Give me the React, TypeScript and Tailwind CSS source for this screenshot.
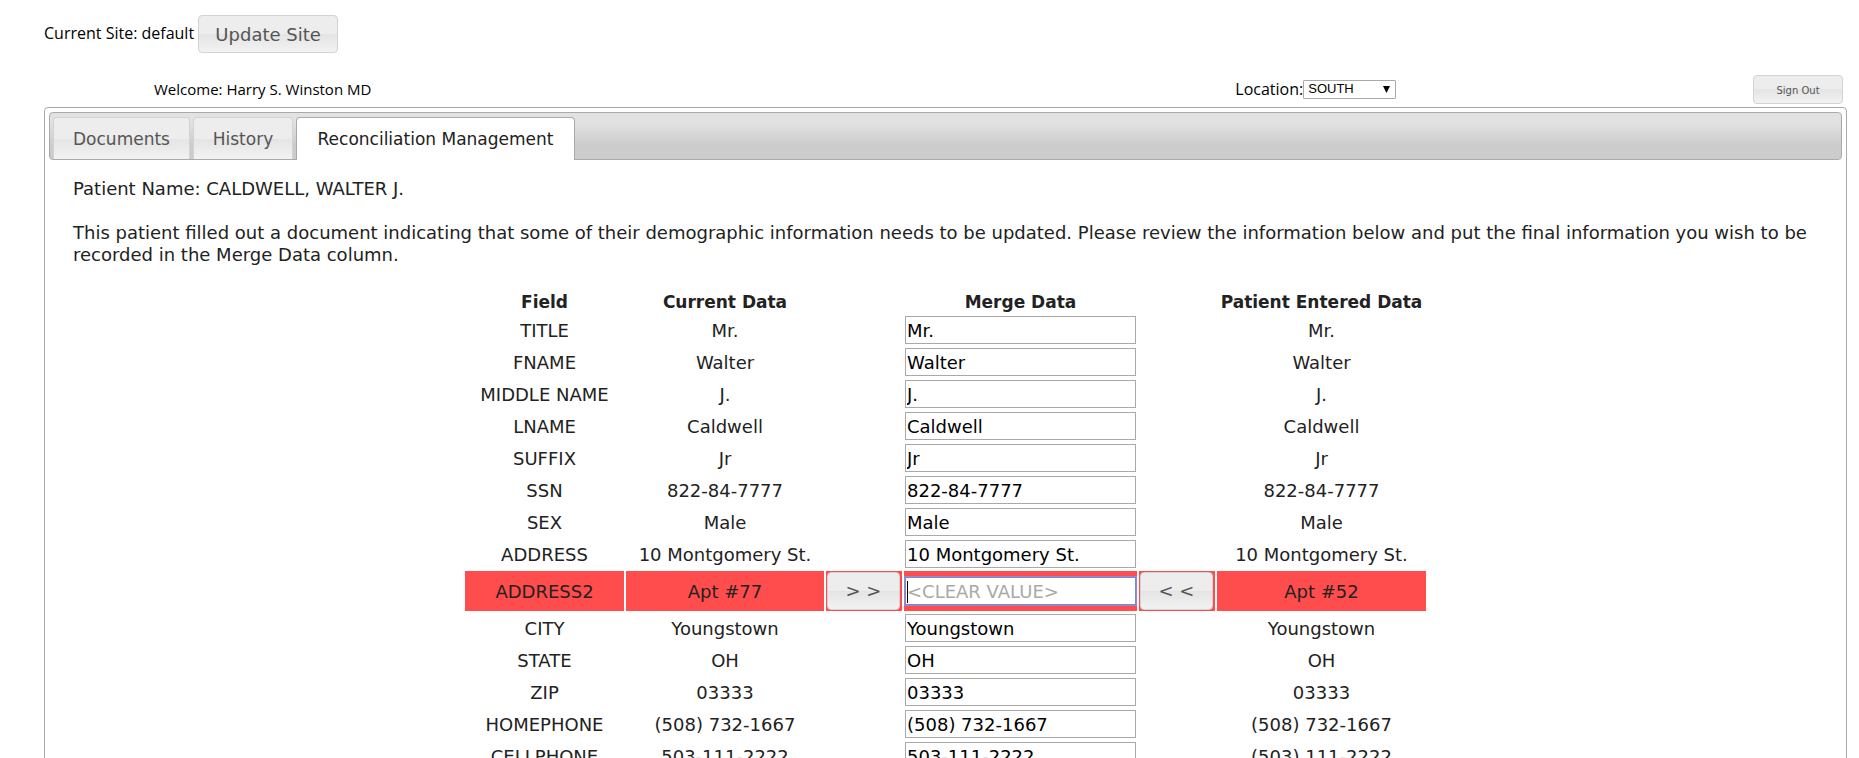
import React from 'react';

interface FieldRow {
  field: string;
  current: string;
  merge: string;
  entered: string;
}

const TABS = [
  { name: 'Documents', width: 'w-[137px]' },
  { name: 'History', width: 'w-[100px]' },
  { name: 'Reconciliation Management', width: 'w-[279px]' },
];

const ROWS: FieldRow[] = [
  { field: 'TITLE', current: 'Mr.', merge: 'Mr.', entered: 'Mr.' },
  { field: 'FNAME', current: 'Walter', merge: 'Walter', entered: 'Walter' },
  { field: 'MIDDLE NAME', current: 'J.', merge: 'J.', entered: 'J.' },
  { field: 'LNAME', current: 'Caldwell', merge: 'Caldwell', entered: 'Caldwell' },
  { field: 'SUFFIX', current: 'Jr', merge: 'Jr', entered: 'Jr' },
  { field: 'SSN', current: '822-84-7777', merge: '822-84-7777', entered: '822-84-7777' },
  { field: 'SEX', current: 'Male', merge: 'Male', entered: 'Male' },
  { field: 'ADDRESS', current: '10 Montgomery St.', merge: '10 Montgomery St.', entered: '10 Montgomery St.' },
  { field: 'ADDRESS2', current: 'Apt #77', merge: '', entered: 'Apt #52' },
  { field: 'CITY', current: 'Youngstown', merge: 'Youngstown', entered: 'Youngstown' },
  { field: 'STATE', current: 'OH', merge: 'OH', entered: 'OH' },
  { field: 'ZIP', current: '03333', merge: '03333', entered: '03333' },
  { field: 'HOMEPHONE', current: '(508) 732-1667', merge: '(508) 732-1667', entered: '(508) 732-1667' },
  { field: 'CELLPHONE', current: '503-111-2222', merge: '503-111-2222', entered: '(503) 111-2222' },
];

const GLASS = 'border border-[#d3d3d3] bg-linear-to-b from-[#ededed] from-50% to-[#f2f2f2] via-[#e4e4e4] via-50% text-[#555555]';

const MergeRow: React.FC<{ row: FieldRow }> = ({ row }) => {
  const differs = row.current !== row.entered && row.merge === '';
  const cell = differs ? 'h-10 bg-[#ff4c4c] p-0' : 'h-[30px] p-0';
  const textCell = differs ? 'h-10 bg-[#ff4c4c] p-0 pt-0.5' : 'h-[30px] p-0 pt-0.5';
  const button = `block h-[38px] w-[73px] rounded ml-px text-[18px] ${GLASS}`;

  return (
    <tr>
      <td className={textCell}>{row.field}</td>
      <td className={textCell}>{row.current}</td>
      <td className={cell}>
        {differs && <button type="button" className={button}>&gt; &gt;</button>}
      </td>
      <td className={cell}>
        <div className="relative mx-px">
          <input
            type="text"
            aria-label={row.field}
            defaultValue={row.merge}
            placeholder="<CLEAR VALUE>"
            className={`block h-7 w-full border bg-white px-px text-black outline-none placeholder:text-[#a9a9a9] ${
              differs ? 'border-[#6b8fe0] ring-1 ring-[#a884b8]' : 'border-[#a9a9a9]'
            }`}
          />
          {/* text cursor of the focused box */}
          {differs && <span className="absolute top-1 left-0.5 h-5.5 w-px bg-black" />}
        </div>
      </td>
      <td className={cell}>
        {differs && <button type="button" className={button}>&lt; &lt;</button>}
      </td>
      <td className={textCell}>{row.entered}</td>
    </tr>
  );
};

const App: React.FC = () => {
  return (
    <div className="h-screen overflow-hidden bg-white pt-[15px] pr-3 pl-11 font-['Open_Sans',sans-serif] text-base text-black">
      <div className="flex h-[38px] items-start gap-1">
        <span className="leading-9">Current Site: default</span>
        <button
          type="button"
          className={`h-[38px] w-[140px] rounded font-['DejaVu_Sans',sans-serif] text-[18px] ${GLASS}`}
        >
          Update Site
        </button>
      </div>

      <div className="mt-[22px] flex h-8 items-start pr-1">
        <div className="w-[66%] pt-[3px] pl-[110px] text-[15px]">Welcome: Harry S. Winston MD</div>
        <div className="ml-1 flex items-center pt-0.5">
          <label htmlFor="location">Location:</label>
          <div className="relative">
            <select
              id="location"
              className="block h-[19px] w-[93px] appearance-none rounded-[1px] border border-[#a9a9a9] bg-white pl-1 font-['Liberation_Sans',sans-serif] text-[13px] leading-4"
            >
              <option>SOUTH</option>
            </select>
            <svg className="pointer-events-none absolute top-1.5 right-1.5" width="7" height="7" viewBox="0 0 7 7">
              <path d="M0 0h7L3.5 7z" fill="#000" />
            </svg>
          </div>
        </div>
        <button
          type="button"
          className={`ml-auto h-[29px] w-[90px] rounded pt-0.5 font-['DejaVu_Sans',sans-serif] text-[10px] ${GLASS}`}
        >
          Sign Out
        </button>
      </div>

      <div className="rounded border border-[#aaaaaa] p-1 pb-6 font-['DejaVu_Sans',sans-serif] text-[18px] leading-[22px] text-[#222222]">
        <nav className="flex h-12 items-end gap-[3px] rounded border border-[#aaaaaa] bg-linear-to-b from-[#e2e2e2] from-20% to-[#cccccc] to-70% pl-[3px] text-[17px]">
          {TABS.map(({ name, width }) => (
            <button
              key={name}
              type="button"
              className={`${width} ${
                name === 'Reconciliation Management'
                  ? '-mb-px h-[43px] rounded-t border border-b-0 border-[#aaaaaa] bg-white text-[#212121]'
                  : `h-[42px] rounded-t border-b-0 ${GLASS}`
              }`}
            >
              {name}
            </button>
          ))}
        </nav>

        <div className="px-6 pt-[18px]">
          <p>Patient Name: CALDWELL, WALTER J.</p>
          <p className="mt-[22px]">
            This patient filled out a document indicating that some of their demographic information needs to be
            updated. Please review the information below and put the final information you wish to be recorded in the
            Merge Data column.
          </p>
        </div>

        <table className="mx-auto mt-[21px] w-[965px] table-fixed border-separate border-spacing-0.5 text-center">
          <colgroup>
            <col className="w-[159px]" />
            <col className="w-[198px]" />
            <col className="w-[76px]" />
            <col className="w-[233px]" />
            <col className="w-[76px]" />
            <col className="w-[209px]" />
          </colgroup>
          <thead className="text-[17px]">
            <tr>
              <th className="h-6 p-0 pt-0.5">Field</th>
              <th className="h-6 p-0 pt-0.5">Current Data</th>
              <th className="h-6 p-0 pt-0.5" />
              <th className="h-6 p-0 pt-0.5">Merge Data</th>
              <th className="h-6 p-0 pt-0.5" />
              <th className="h-6 p-0 pt-0.5">Patient Entered Data</th>
            </tr>
          </thead>
          <tbody>
            {ROWS.map((row) => (
              <MergeRow key={row.field} row={row} />
            ))}
          </tbody>
        </table>
      </div>
    </div>
  );
};

export default App;
